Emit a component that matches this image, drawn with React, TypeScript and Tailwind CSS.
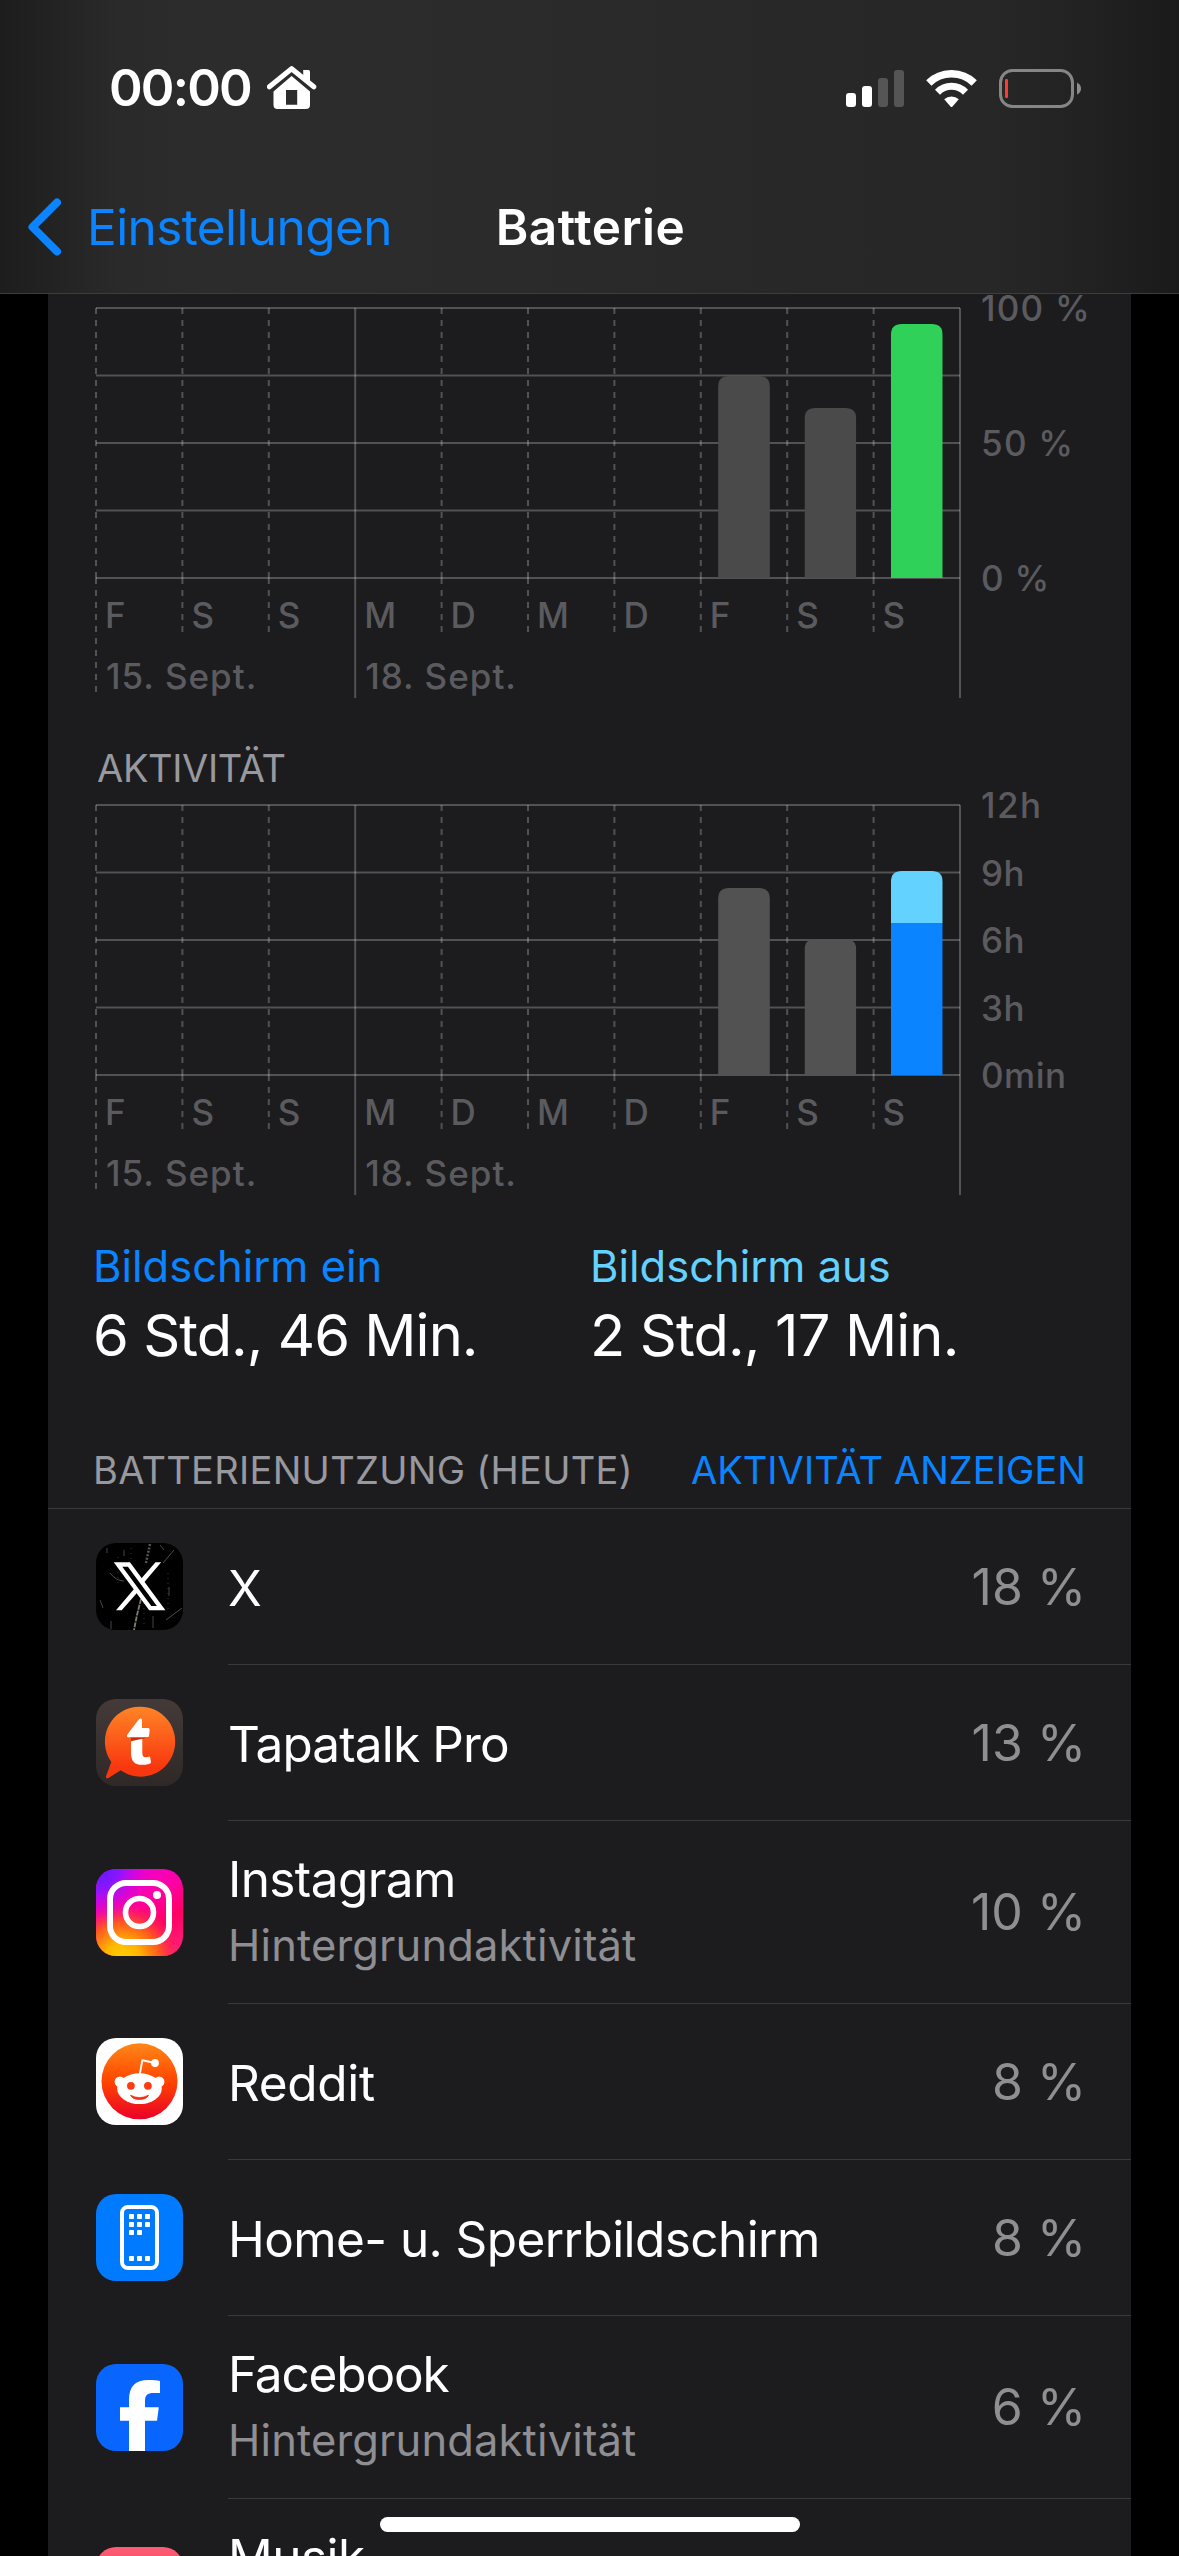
import type { ReactNode } from 'react';

interface Bar {
    day: number;
    segments: { from: number; to: number; color: string }[];
}

interface ChartProps {
    id: string;
    bars: Bar[];
    scale: { label: string; y: number; className: string }[];
}

interface AppUsage {
    name: string;
    nameClass: string;
    background?: boolean;
    percent: string;
    icon: ReactNode;
}

const DAYS = ['F', 'S', 'S', 'M', 'D', 'M', 'D', 'F', 'S', 'S'];

// plot area inside the chart svg
const LEFT = 48;
const TOP = 14;
const STEP = 86.4;
const BOTTOM = TOP + 270;

const levelBars: Bar[] = [
    { day: 7, segments: [{ from: 270, to: 68, color: '#4a4a4a' }] },
    { day: 8, segments: [{ from: 270, to: 100, color: '#4a4a4a' }] },
    { day: 9, segments: [{ from: 270, to: 16, color: '#30d158' }] },
];

const activityBars: Bar[] = [
    { day: 7, segments: [{ from: 270, to: 83, color: '#525252' }] },
    { day: 8, segments: [{ from: 270, to: 134, color: '#525252' }] },
    {
        day: 9,
        segments: [
            { from: 118, to: 66, color: '#64d2ff' },
            { from: 270, to: 118, color: '#0a84ff' },
        ],
    },
];

function Chart({ id, bars, scale }: ChartProps) {
    return (
        <svg className="block shrink-0 w-[1083px] h-[408px]" viewBox="0 0 1083 408">
            <g stroke="#fff" strokeOpacity="0.24" strokeWidth="2">
                {[0, 67.5, 135, 202.5, 270].map((y) => (
                    <line key={y} x1={LEFT} x2={LEFT + 864} y1={TOP + y} y2={TOP + y} />
                ))}
                {DAYS.map((_, i) => {
                    const x = LEFT + i * STEP;
                    if (i === 3) return <line key={i} x1={x} x2={x} y1={TOP} y2={TOP + 390} />;
                    return (
                        <g key={i} strokeDasharray="6 6">
                            <line x1={x} x2={x} y1={TOP} y2={BOTTOM} />
                            <line x1={x} x2={x} y1={BOTTOM} y2={i === 0 ? BOTTOM + 120 : BOTTOM + 54} />
                        </g>
                    );
                })}
                <line x1={LEFT + 864} x2={LEFT + 864} y1={TOP} y2={TOP + 390} />
            </g>

            {bars.map((bar) => {
                const x = LEFT + bar.day * STEP + 17.3;
                const top = TOP + bar.segments[0].to;
                return (
                    <g key={bar.day}>
                        <clipPath id={`${id}-${bar.day}`}>
                            <path d={`M${x} ${BOTTOM}V${top + 11}q0-11 11-11h29.8q11 0 11 11V${BOTTOM}z`} />
                        </clipPath>
                        <g clipPath={`url(#${id}-${bar.day})`}>
                            {bar.segments.map((s) => (
                                <rect key={s.to} x={x} y={TOP + s.to} width={51.8} height={s.from - s.to} fill={s.color} />
                            ))}
                        </g>
                    </g>
                );
            })}

            <g fill="#5b5b5f" className="text-[35px] font-medium">
                {DAYS.map((d, i) => (
                    <text key={i} x={LEFT + i * STEP + 9} y={BOTTOM + 50}>{d}</text>
                ))}
                <text x={LEFT + 10} y={BOTTOM + 111} className="tracking-[1.01px]">15. Sept.</text>
                <text x={LEFT + 3 * STEP + 10} y={BOTTOM + 111} className="tracking-[1.01px]">18. Sept.</text>
                {scale.map((s) => (
                    <text key={s.label} x={LEFT + 885} y={TOP + s.y + 13} className={s.className}>{s.label}</text>
                ))}
            </g>
        </svg>
    );
}

function HouseIcon() {
    return (
        <svg className="w-[50px] h-[44px]" viewBox="0 0 50 44">
            <path d="M36.2 4h5.3q1.5 0 1.5 1.5V17l-6.8-6z" fill="#fff" />
            <path d="M2.4 20.8 24.6 2.7l22.2 18.1" fill="none" stroke="#fff" strokeWidth="5" strokeLinecap="round" strokeLinejoin="round" />
            <path fillRule="evenodd" d="M24.6 10 43 25.5V39q0 4-4 4H10.5q-4 0-4-4V25.5zM19 24v14.7h11.2V24z" fill="#fff" />
        </svg>
    );
}

function SignalIcon() {
    return (
        <svg className="w-[58px] h-[37px]" viewBox="0 0 58 37">
            <rect x="0" y="23" width="10" height="14" rx="3" fill="#fff" />
            <rect x="16" y="16" width="10" height="21" rx="3" fill="#fff" />
            <rect x="32" y="8" width="10" height="29" rx="3" fill="#555" />
            <rect x="48" y="0" width="10" height="37" rx="3" fill="#555" />
        </svg>
    );
}

function WifiIcon() {
    return (
        <svg className="w-[51px] h-[37px]" viewBox="0 0 51 37">
            <path d="M2.8 13A32.6 32.6 0 0 1 48.2 13" fill="none" stroke="#fff" strokeWidth="7.6" />
            <path d="M11.5 22.3A19.5 19.5 0 0 1 39.5 22.3" fill="none" stroke="#fff" strokeWidth="7" />
            <path d="M18.2 29.3A11 11 0 0 1 32.8 29.3L26.5 36.5q-1 1-2 0z" fill="#fff" />
        </svg>
    );
}

function BatteryIcon() {
    return (
        <svg className="w-[83px] h-[39px]" viewBox="0 0 83 39">
            <rect x="1.5" y="1.5" width="72" height="36" rx="12" fill="none" stroke="#868686" strokeWidth="3" />
            <rect x="6" y="10" width="3" height="19" rx="1" fill="#ff3b30" />
            <path d="M78 13.5q4 2 4 6t-4 6z" fill="#8c8c8c" />
        </svg>
    );
}

function XIcon() {
    return (
        <svg className="w-full h-full bg-black" viewBox="0 0 87 87">
            {/* scratches */}
            <g stroke="#a09a90" fill="none">
                <path d="M45 56 41 72 38 87" strokeWidth="1.8" strokeOpacity=".8" strokeDasharray="5 1" />
                <path d="M54 1 50 20" strokeWidth="2.5" strokeOpacity=".55" strokeDasharray="2 1.5" />
                <path d="M78 7 67 20M86 65 70 77M14 30q6 8 14 8" strokeOpacity=".5" />
                <path d="M28 7v6M11 5v5M73 44v9M57 73v12M15 78v8M64 2l4 5M4 57l3 8" strokeOpacity=".45" />
                <path d="M22 14v30M48 60v22M72 30v40M35 5v12" strokeOpacity=".35" strokeDasharray="1 4" />
            </g>
            <path d="M22 21.5h10.9L65.2 65.2H54.3z" fill="none" stroke="#fff" strokeWidth="4.3" />
            <path d="M59.5 19.3h5.7L48 39.5l-2.9-3.8zM20 67.3h5.7l16.5-18.8-2.9-3.9z" fill="#fff" />
        </svg>
    );
}

function TapatalkIcon() {
    return (
        <svg className="w-full h-full bg-linear-to-b from-[#443b39] to-[#2f2827]" viewBox="0 0 87 87">
            <defs>
                <linearGradient id="tapatalk" x1="0" y1="0" x2="0" y2="1">
                    <stop offset="0" stopColor="#ff8426" />
                    <stop offset="0.85" stopColor="#f9370f" />
                </linearGradient>
            </defs>
            <path d="M43.5 7.7a34.5 35 0 1 1-18.8 63.5L12 79.2q-2.5.4-2-2L15.3 63A34.5 35 0 0 1 43.5 7.7z" fill="url(#tapatalk)" />
            <path d="M35 38h18l-7 2.2-11 3z" fill="#d42a0c" />
            <path d="M42.3 21q3.7-3 3.7.5V29h6q1.7 0 1.7 2l-.7 6q-.2 1.2-2 1.2H32q-2-.2-.3-3.2z" fill="#fff" />
            <path d="M35 42.3 46.3 39.7V54c0 4 2 5 7.7 3.5l1 5.5q0 1.5-2 1.9C43 67 35 66 35 54z" fill="#fff" />
        </svg>
    );
}

function InstagramIcon() {
    return (
        <svg className="w-full h-full" viewBox="0 0 87 87">
            <defs>
                <linearGradient id="ig-base" x1="0.2" y1="0" x2="0.8" y2="1">
                    <stop offset="0" stopColor="#e800e0" />
                    <stop offset="0.45" stopColor="#ff00a0" />
                    <stop offset="0.7" stopColor="#ff0064" />
                    <stop offset="1" stopColor="#ff1f7a" />
                </linearGradient>
                <radialGradient id="ig-warm" cx="0.3" cy="1.05" r="0.72">
                    <stop offset="0" stopColor="#ffd600" />
                    <stop offset="0.3" stopColor="#ffb400" />
                    <stop offset="0.6" stopColor="#ff6414" stopOpacity="0.9" />
                    <stop offset="1" stopColor="#ff0069" stopOpacity="0" />
                </radialGradient>
                <radialGradient id="ig-cool" cx="0.04" cy="0" r="0.6">
                    <stop offset="0" stopColor="#5a1cff" />
                    <stop offset="0.4" stopColor="#8f14ff" />
                    <stop offset="1" stopColor="#e600d8" stopOpacity="0" />
                </radialGradient>
            </defs>
            <rect width="87" height="87" fill="url(#ig-base)" />
            <rect width="87" height="87" fill="url(#ig-warm)" />
            <rect width="87" height="87" fill="url(#ig-cool)" />
            <g fill="none" stroke="#fff">
                <rect x="14" y="14" width="59" height="59" rx="16" strokeWidth="6" />
                <circle cx="43.5" cy="43.5" r="14" strokeWidth="5.6" />
            </g>
            <circle cx="61" cy="26" r="4" fill="#fff" />
        </svg>
    );
}

function RedditIcon() {
    return (
        <svg className="w-full h-full bg-white" viewBox="0 0 87 87">
            <defs>
                <linearGradient id="reddit" x1="0" y1="0" x2="0" y2="1">
                    <stop offset="0" stopColor="#ff8717" />
                    <stop offset="0.5" stopColor="#ff4500" />
                    <stop offset="1" stopColor="#eb0028" />
                </linearGradient>
            </defs>
            <circle cx="43.5" cy="43.3" r="38" fill="url(#reddit)" />
            <g fill="#fff">
                <circle cx="23.9" cy="43.7" r="5.3" />
                <circle cx="63.1" cy="43.7" r="5.3" />
                <ellipse cx="43.5" cy="50.7" rx="22.3" ry="15.4" />
                <circle cx="59" cy="25" r="3.9" />
            </g>
            <path d="M43.8 36 46.3 22.3 58 24.8" fill="none" stroke="#fff" strokeWidth="1.9" strokeLinejoin="round" />
            <circle cx="34.9" cy="47.8" r="3.9" fill="#fa3c10" />
            <circle cx="51.9" cy="47.8" r="3.9" fill="#fa3c10" />
            <path d="M34.5 57.2q8.9 4.8 18 0-2 4.3-9 4.3t-9-4.3z" fill="#f52e14" stroke="#f52e14" strokeWidth=".8" strokeLinejoin="round" />
        </svg>
    );
}

function HomeScreenIcon() {
    const dots = [
        [33, 20], [41, 20], [49, 20],
        [33, 28], [41, 28], [49, 28],
        [33, 36], [41, 36],
        [33, 62], [41, 62], [49, 62],
    ];
    return (
        <svg className="w-full h-full bg-[#007aff]" viewBox="0 0 87 87">
            <rect x="26" y="13" width="35" height="61" rx="6" fill="none" stroke="#fff" strokeWidth="4" />
            {dots.map(([x, y]) => (
                <rect key={`${x}-${y}`} x={x} y={y} width="5" height="5" rx="0.8" fill="#fff" />
            ))}
        </svg>
    );
}

function FacebookIcon() {
    return (
        <svg className="w-full h-full bg-[#0866ff]" viewBox="0 0 87 87">
            <path d="M33 87V56.7h-9V43.3h9V36c0-13.5 6-20 19.5-20 4.5 0 8.500.3 11.5 1v12h-6.500c-6 0-8.500 2.3-8.500 8v6.3h13.8L61 56.7H49V87z" fill="#fff" />
        </svg>
    );
}

function MusicIcon() {
    return <div className="w-full h-full bg-linear-to-b from-[#fb5c74] to-[#fa233b]" />;
}

const apps: AppUsage[] = [
    { name: 'X', nameClass: 'tracking-normal', percent: '18 %', icon: <XIcon /> },
    { name: 'Tapatalk Pro', nameClass: 'tracking-[-0.86px]', percent: '13 %', icon: <TapatalkIcon /> },
    { name: 'Instagram', nameClass: 'tracking-[-0.6px]', background: true, percent: '10 %', icon: <InstagramIcon /> },
    { name: 'Reddit', nameClass: 'tracking-[-0.32px]', percent: '8 %', icon: <RedditIcon /> },
    { name: 'Home- u. Sperrbildschirm', nameClass: 'tracking-[-0.58px]', percent: '8 %', icon: <HomeScreenIcon /> },
    { name: 'Facebook', nameClass: 'tracking-[-1.16px]', background: true, percent: '6 %', icon: <FacebookIcon /> },
    { name: 'Musik', nameClass: 'tracking-[-0.5px]', background: true, percent: '5 %', icon: <MusicIcon /> },
];

function AppRow({ app }: { app: AppUsage }) {
    return (
        <div className={`flex pl-12 shrink-0 ${app.background ? 'h-[183px]' : 'h-[156px]'}`}>
            <div className="flex items-center pb-px">
                <div className="w-[87px] h-[87px] rounded-[20px] overflow-hidden">{app.icon}</div>
            </div>
            <div className="flex flex-1 items-center justify-between ml-[45px] pr-[45px] border-b border-[#3a3a3d]">
                {app.background ? (
                    <div>
                        <div className={`text-[49.5px] leading-[66px] text-white ${app.nameClass}`}>{app.name}</div>
                        <div className="text-[43.5px] leading-[66px] tracking-[0.14px] text-[#8e8e93]">Hintergrundaktivität</div>
                    </div>
                ) : (
                    <div className={`pt-[3px] text-[49.5px] leading-[66px] text-white ${app.nameClass}`}>{app.name}</div>
                )}
                <div className="text-[50px] leading-[66px] text-[#8e8e93]">{app.percent}</div>
            </div>
        </div>
    );
}

export default function App() {
    return (
        <div className="relative flex flex-col w-[1179px] h-[2556px] overflow-hidden bg-black font-['Inter','Liberation_Sans',sans-serif]">
            {/* Status bar & navigation */}
            <header className="shrink-0 h-[294px] border-b border-[#3d3d3f] bg-[linear-gradient(90deg,#1d1d1d_0%,#222222_4%,#2a2a2a_10%,#2c2c2c_17%,#2b2b2c_45%,#282828_65%,#272727_84%,#222222_92%,#1a1a1a_100%)]">
                <div className="flex items-center justify-between pt-[58px] pl-[109px] pr-[97px]">
                    <div className="flex items-center">
                        <span className="w-[158px] text-[51px] leading-[60px] font-semibold tracking-[-1.8px] text-white">00:00</span>
                        <HouseIcon />
                    </div>
                    <div className="flex items-center gap-[22px]">
                        <SignalIcon />
                        <WifiIcon />
                        <BatteryIcon />
                    </div>
                </div>
                <div className="flex items-center mt-[79px] pl-7 pr-[26px]">
                    <div className="flex flex-1 items-center gap-[26px]">
                        <svg className="w-[33px] h-[58px]" viewBox="0 0 33 58">
                            <path d="M29 4.5 4.5 29 29 53.5" fill="none" stroke="#0a84ff" strokeWidth="8" strokeLinecap="round" strokeLinejoin="round" />
                        </svg>
                        <span className="text-[49.5px] leading-[60px] tracking-[-0.6px] text-[#0a84ff]">Einstellungen</span>
                    </div>
                    <h1 className="text-[49.5px] leading-[60px] font-semibold tracking-[0.52px] text-white">Batterie</h1>
                    <div className="flex-1" />
                </div>
            </header>

            <main className="flex-1 flex flex-col mx-12 bg-[#1c1c1e] overflow-hidden">
                <Chart
                    id="level"
                    bars={levelBars}
                    scale={[
                        { label: '100 %', y: 0, className: 'tracking-[1.24px]' },
                        { label: '50 %', y: 135, className: 'tracking-[1.24px]' },
                        { label: '0 %', y: 270, className: 'tracking-[0.8px]' },
                    ]}
                />

                <h2 className="mt-[44px] pl-[49px] text-[38px] leading-[45px] tracking-[-0.34px] text-[#98989f]">AKTIVITÄT</h2>
                <Chart
                    id="activity"
                    bars={activityBars}
                    scale={[
                        { label: '12h', y: 0, className: 'tracking-[1.5px]' },
                        { label: '9h', y: 67.5, className: 'tracking-[0.5px]' },
                        { label: '6h', y: 135, className: 'tracking-[0.5px]' },
                        { label: '3h', y: 202.5, className: 'tracking-[0.5px]' },
                        { label: '0min', y: 270, className: 'tracking-[0.5px]' },
                    ]}
                />

                {/* Totals */}
                <div className="flex mt-10 pl-[45px]">
                    <div className="w-[497px]">
                        <div className="text-[43.5px] leading-[54px] text-[#0a84ff]">Bildschirm ein</div>
                        <div className="mt-[7px] text-[57.8px] leading-[70px] tracking-[-0.96px] text-white">6 Std., 46 Min.</div>
                    </div>
                    <div>
                        <div className="text-[43.5px] leading-[54px] text-[#64d2ff]">Bildschirm aus</div>
                        <div className="mt-[7px] text-[57.8px] leading-[70px] tracking-[-0.86px] text-white">2 Std., 17 Min.</div>
                    </div>
                </div>

                {/* Usage list */}
                <div className="flex justify-between mt-[76px] pl-[45px] pr-[45px] pb-3.5 border-b border-[#3a3a3d] text-[38px] leading-[48px]">
                    <h2 className="tracking-[0.3px] text-[#98989f]">BATTERIENUTZUNG (HEUTE)</h2>
                    <button className="tracking-[0.06px] text-[#0a84ff]">AKTIVITÄT ANZEIGEN</button>
                </div>
                {apps.map((app) => (
                    <AppRow key={app.name} app={app} />
                ))}
            </main>

            {/* Home indicator */}
            <div className="absolute bottom-6 left-[380px] w-[420px] h-[15px] rounded-full bg-white" />
        </div>
    );
}
